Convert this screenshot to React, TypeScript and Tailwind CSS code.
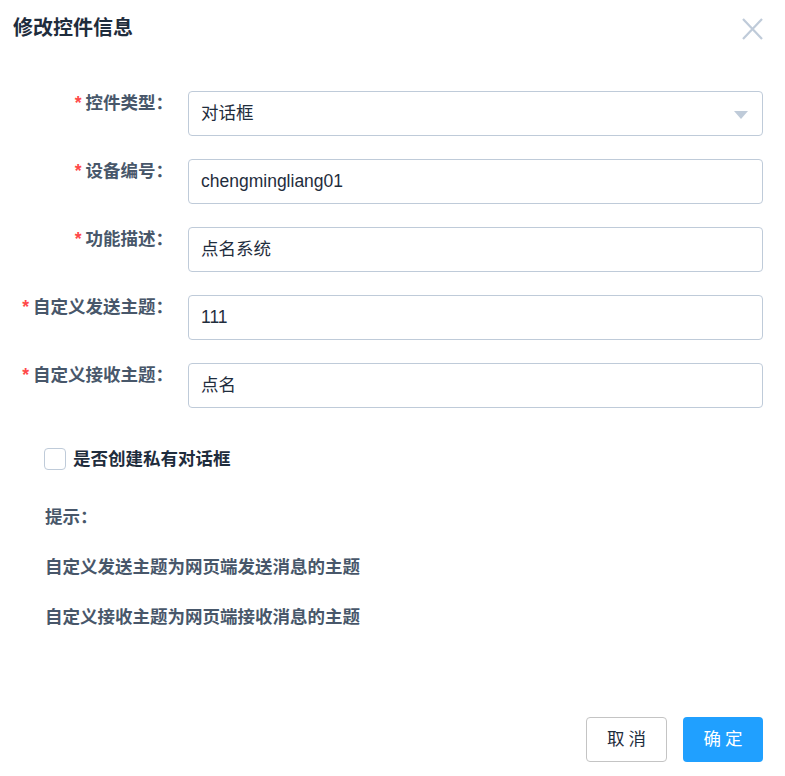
import React, { useState } from 'react';

const fontStack = { fontFamily: '"Liberation Sans", "Noto Sans CJK SC", sans-serif' };

interface Field {
  label: string;
  value: string;
  select?: boolean;
}

const fields: Field[] = [
  { label: '控件类型：', value: '对话框', select: true },
  { label: '设备编号：', value: 'chengmingliang01' },
  { label: '功能描述：', value: '点名系统' },
  { label: '自定义发送主题：', value: '111' },
  { label: '自定义接收主题：', value: '点名' },
];

export default function App() {
  const [isPrivate, setIsPrivate] = useState(false);

  return (
    <div className="w-[785px] h-[776px] bg-white" style={fontStack}>
      {/* Header */}
      <div className="flex items-start justify-between pl-[13px] pr-[22px] pt-[14px]">
        <h2 className="text-[20px] leading-[28px] font-bold text-[#1f2d3d]">修改控件信息</h2>
        <button className="mt-[4px]">
          <svg width="21" height="22" viewBox="0 0 21 22" fill="none" stroke="#bfcbd9" strokeWidth="2.2">
            <line x1="1" y1="1" x2="20" y2="21" />
            <line x1="20" y1="1" x2="1" y2="21" />
          </svg>
        </button>
      </div>

      {/* Form */}
      <div className="mt-[49px]">
        {fields.map((f) => (
          <div key={f.label} className="flex mb-[23px]">
            <label className="w-[188px] shrink-0 pr-[15px] text-right text-[17.5px] leading-6 font-bold text-[#48576a]">
              <span className="text-[#ff4949] mr-[4px]">*</span>
              {f.label}
            </label>
            <div className="relative w-[575px] h-[45px] border border-[#bfcbd9] rounded-[4px] flex items-center pl-[12px] text-[17.5px] text-[#1f2d3d]">
              {f.value}
              {f.select && (
                <svg className="absolute right-[14px] top-[19px]" width="14" height="8" viewBox="0 0 14 8">
                  <polygon points="0,0 14,0 7,8" fill="#bfcbd9" />
                </svg>
              )}
            </div>
          </div>
        ))}
      </div>

      {/* Checkbox */}
      <div className="flex items-center pl-[44px] mt-[40px] h-[22px]">
        <button
          onClick={() => setIsPrivate(!isPrivate)}
          className={`w-[22px] h-[22px] rounded-[4px] border ${isPrivate ? 'bg-[#20a0ff] border-[#20a0ff]' : 'bg-white border-[#bfcbd9]'}`}
        />
        <span className="ml-[7px] text-[17.5px] font-bold text-[#1f2d3d]">是否创建私有对话框</span>
      </div>

      {/* Hints */}
      <div className="pl-[45px] text-[17.5px] leading-6 font-bold text-[#48576a]">
        <p className="mt-[35px]">提示：</p>
        <p className="mt-[26px]">自定义发送主题为网页端发送消息的主题</p>
        <p className="mt-[26px]">自定义接收主题为网页端接收消息的主题</p>
      </div>

      {/* Footer */}
      <div className="flex justify-end gap-[16px] pr-[22px] mt-[88px]">
        <button className="w-[81px] h-[45px] border border-[#c4c4c4] rounded-[4px] bg-white text-[17.5px] tracking-[4px] pl-[4px] text-[#1f2d3d]">
          取消
        </button>
        <button className="w-[80px] h-[45px] rounded-[4px] bg-[#20a0ff] text-[17.5px] tracking-[4px] pl-[4px] text-white">
          确定
        </button>
      </div>
    </div>
  );
}
